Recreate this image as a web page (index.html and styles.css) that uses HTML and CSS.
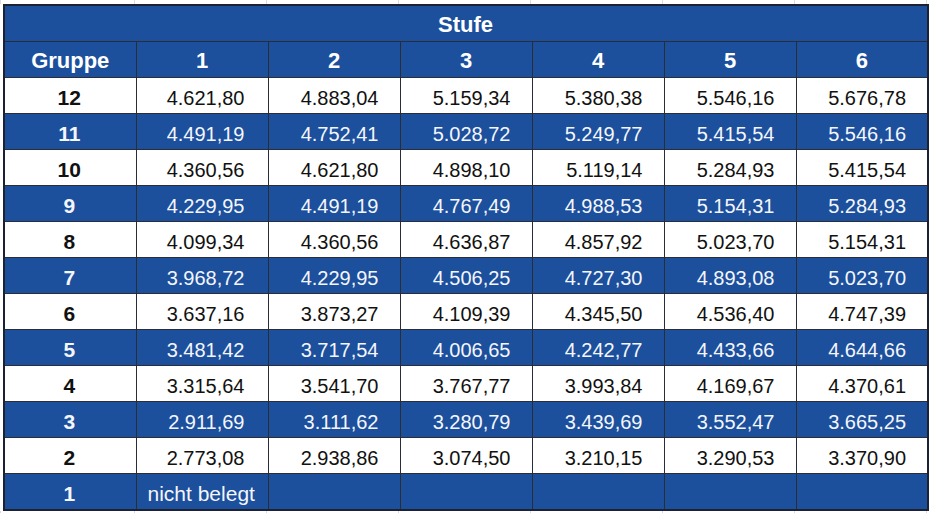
FILE: index.html
```html
<!DOCTYPE html>
<html lang="de">
<head>
<meta charset="utf-8">
<title>Stufe</title>
<link rel="stylesheet" href="styles.css">
</head>
<body>
<div class="sheet">
  <div class="gutter"><span></span><span></span><span></span><span></span><span></span><span></span><span></span></div>
  <table class="grid">
    <colgroup><col><col><col><col><col><col><col></colgroup>
    <thead>
      <tr class="top"><th class="blank"></th><th colspan="6" class="stufe">Stufe</th></tr>
      <tr class="head"><th>Gruppe</th><th>1</th><th>2</th><th>3</th><th>4</th><th>5</th><th>6</th></tr>
    </thead>
    <tbody>
      <tr class="w"><th>12</th><td class="c1">4.621,80</td><td>4.883,04</td><td>5.159,34</td><td>5.380,38</td><td>5.546,16</td><td>5.676,78</td></tr>
      <tr class="b"><th>11</th><td class="c1">4.491,19</td><td>4.752,41</td><td>5.028,72</td><td>5.249,77</td><td>5.415,54</td><td>5.546,16</td></tr>
      <tr class="w"><th>10</th><td class="c1">4.360,56</td><td>4.621,80</td><td>4.898,10</td><td>5.119,14</td><td>5.284,93</td><td>5.415,54</td></tr>
      <tr class="b"><th>9</th><td class="c1">4.229,95</td><td>4.491,19</td><td>4.767,49</td><td>4.988,53</td><td>5.154,31</td><td>5.284,93</td></tr>
      <tr class="w"><th>8</th><td class="c1">4.099,34</td><td>4.360,56</td><td>4.636,87</td><td>4.857,92</td><td>5.023,70</td><td>5.154,31</td></tr>
      <tr class="b"><th>7</th><td class="c1">3.968,72</td><td>4.229,95</td><td>4.506,25</td><td>4.727,30</td><td>4.893,08</td><td>5.023,70</td></tr>
      <tr class="w"><th>6</th><td class="c1">3.637,16</td><td>3.873,27</td><td>4.109,39</td><td>4.345,50</td><td>4.536,40</td><td>4.747,39</td></tr>
      <tr class="b"><th>5</th><td class="c1">3.481,42</td><td>3.717,54</td><td>4.006,65</td><td>4.242,77</td><td>4.433,66</td><td>4.644,66</td></tr>
      <tr class="w"><th>4</th><td class="c1">3.315,64</td><td>3.541,70</td><td>3.767,77</td><td>3.993,84</td><td>4.169,67</td><td>4.370,61</td></tr>
      <tr class="b"><th>3</th><td class="c1">2.911,69</td><td>3.111,62</td><td>3.280,79</td><td>3.439,69</td><td>3.552,47</td><td>3.665,25</td></tr>
      <tr class="w"><th>2</th><td class="c1">2.773,08</td><td>2.938,86</td><td>3.074,50</td><td>3.210,15</td><td>3.290,53</td><td>3.370,90</td></tr>
      <tr class="b last"><th>1</th><td class="note">nicht belegt</td><td></td><td></td><td></td><td></td><td></td></tr>
    </tbody>
  </table>
  <div class="gutter"><span></span><span></span><span></span><span></span><span></span><span></span><span></span></div>
</div>
</body>
</html>
```
FILE: styles.css
```css
html, body {
  margin: 0;
  padding: 0;
  background: #ffffff;
}

body {
  font-family: "Liberation Sans", Arial, sans-serif;
  color: #111111;
}

.sheet {
  padding-left: 3px;
  width: 924px;
}

.gutter {
  display: grid;
  grid-template-columns: repeat(7, 132px);
  height: 4px;
}

.gutter span {
  border-right: 1px solid #dcdcdc;
}

.gutter span:first-child {
  margin-left: -3px;
  border-left: 1px solid #dcdcdc;
}

.grid {
  border-collapse: collapse;
  table-layout: fixed;
  width: 924px;
  border: 2px solid #1c2233;
}

.grid col {
  width: 132px;
}

.grid th,
.grid td {
  border: 1px solid #2a2d38;
  height: 36px;
  padding: 0;
  box-sizing: border-box;
  line-height: 22px;
}

.grid .top th {
  background: #1c4f9c;
  color: #ffffff;
  height: 36px;
  font-size: 22px;
  font-weight: bold;
  padding-top: 4px;
}

.grid .top .blank {
  border-right: none;
}

.grid .top .stufe {
  border-left: none;
  text-align: center;
  padding-right: 132px;
}

.grid .head th {
  background: #1c4f9c;
  color: #ffffff;
  font-size: 22px;
  font-weight: bold;
  text-align: center;
  padding-top: 4px;
}

.grid tbody th {
  font-size: 21px;
  font-weight: bold;
  text-align: center;
  padding-top: 5px;
  padding-right: 2px;
}

.grid tbody td {
  font-size: 20px;
  text-align: right;
  padding-right: 21px;
  padding-top: 5px;
}

.grid tbody td.c1 {
  padding-right: 23px;
}

.grid .w th,
.grid .w td {
  background: #ffffff;
  color: #111111;
}

.grid .b th,
.grid .b td {
  background: #1c4f9c;
  color: #f4f6fb;
}

.grid .last th,
.grid .last td {
  height: 37px;
}

.grid tbody td.note {
  text-align: left;
  padding-left: 11px;
  padding-right: 0;
  font-size: 21px;
}
```
